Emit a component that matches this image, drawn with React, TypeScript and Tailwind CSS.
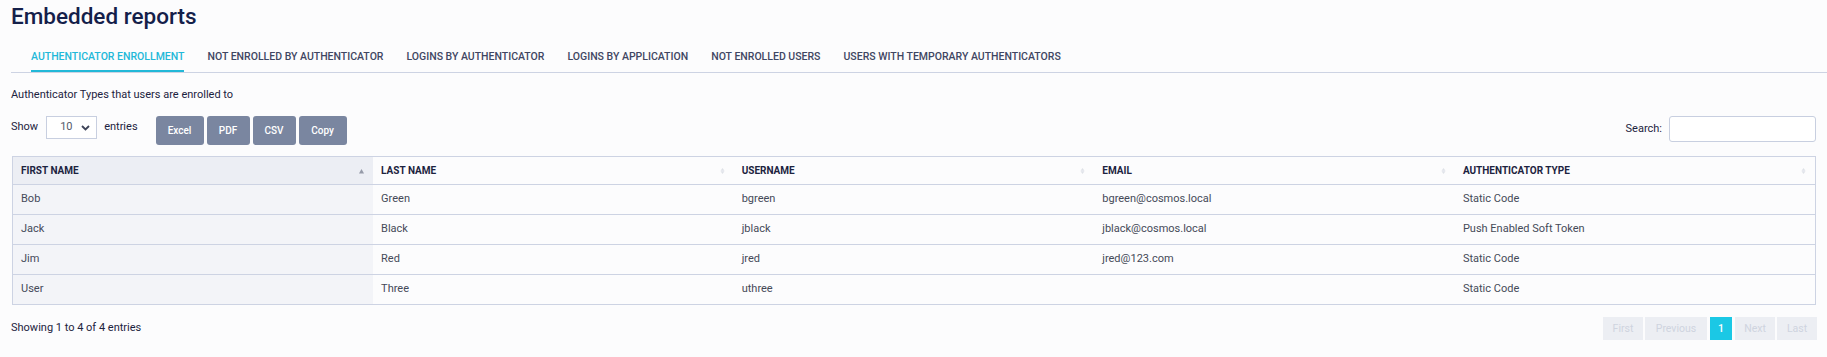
import React from "react";

const tabs = [
  "AUTHENTICATOR ENROLLMENT",
  "NOT ENROLLED BY AUTHENTICATOR",
  "LOGINS BY AUTHENTICATOR",
  "LOGINS BY APPLICATION",
  "NOT ENROLLED USERS",
  "USERS WITH TEMPORARY AUTHENTICATORS",
];

const cols = ["FIRST NAME", "LAST NAME", "USERNAME", "EMAIL", "AUTHENTICATOR TYPE"];

const rows = [
  ["Bob", "Green", "bgreen", "bgreen@cosmos.local", "Static Code"],
  ["Jack", "Black", "jblack", "jblack@cosmos.local", "Push Enabled Soft Token"],
  ["Jim", "Red", "jred", "jred@123.com", "Static Code"],
  ["User", "Three", "uthree", "", "Static Code"],
];

function SortUp() {
  return (
    <svg width="7" height="8" viewBox="0 0 7 8" className="absolute right-[8px] top-1/2 -translate-y-1/2">
      <path d="M3.5 2 L6 6.5 L1 6.5 Z" fill="#959aa8" />
    </svg>
  );
}

function SortBoth() {
  return (
    <svg width="7" height="9" viewBox="0 0 7 9" className="absolute right-[8px] top-1/2 -translate-y-1/2">
      <path d="M3.5 1.5 L5.5 4.3 L1.5 4.3 Z" fill="#dfe2e8" />
      <path d="M3.5 7.5 L5.5 4.7 L1.5 4.7 Z" fill="#dfe2e8" />
    </svg>
  );
}

export default function App() {
  return (
    <div
      className="w-[1827px] h-[357px] bg-[#fcfcfd] text-[#1c2340] overflow-hidden"
      style={{ fontFamily: "Roboto, 'Noto Sans', sans-serif" }}
    >
      <h1 className="pl-[11px] pt-[3px] text-[22.5px] leading-[26px] font-medium text-[#14204a]">
        Embedded reports
      </h1>

      <div className="mt-[22px] ml-[11px] border-b border-[#cdd3e3] flex gap-[23px] pl-[20px]">
        {tabs.map((t, i) => (
          <div
            key={t}
            className={
              "text-[10.5px] leading-[12px] font-medium pb-[7px] border-b-2 " +
              (i === 0 ? "text-[#22b8d8] border-[#22b8d8]" : "text-[#3f4662] border-transparent")
            }
          >
            {t}
          </div>
        ))}
      </div>

      <div className="pl-[11px] mt-[15px] text-[11px] leading-[14px] text-[#1c2340]">
        Authenticator Types that users are enrolled to
      </div>

      <div className="flex items-start justify-between pl-[11px] pr-[11px] mt-[14px]">
        <div className="flex items-start">
          <div className="flex items-center h-[23px] text-[11px] text-[#1c2340]">
            <span>Show</span>
            <div className="ml-[8px] w-[51px] h-[23px] border border-[#c8cfe0] bg-white flex items-center justify-between pl-[13px] pr-[6px]">
              <span className="text-[11px] text-[#555b6b]">10</span>
              <svg width="9" height="6" viewBox="0 0 9 6">
                <path d="M1 1 L4.5 4.5 L8 1" fill="none" stroke="#3d4358" strokeWidth="1.8" />
              </svg>
            </div>
            <span className="ml-[7px]">entries</span>
          </div>
          <div className="flex gap-[3px] ml-[18px]">
            {[
              ["Excel", "w-[48px]"],
              ["PDF", "w-[43px]"],
              ["CSV", "w-[43px]"],
              ["Copy", "w-[48px]"],
            ].map(([l, w]) => (
              <div
                key={l}
                className={w + " h-[29px] rounded-[3px] bg-[#7a86a0] text-white text-[10px] font-medium flex items-center justify-center"}
              >
                {l}
              </div>
            ))}
          </div>
        </div>
        <div className="flex items-center h-[26px]">
          <span className="text-[11px] text-[#1c2340]">Search:</span>
          <div className="ml-[7px] w-[147px] h-[26px] border border-[#c8cfe0] rounded-[3px] bg-white" />
        </div>
      </div>

      <div className="pl-[12px] pr-[11px] mt-[11px]">
        <table className="w-full table-fixed border-collapse border border-[#cdd3e3] text-[11px]">
          <thead>
            <tr className="h-[28px]">
              {cols.map((c, i) => (
                <th
                  key={c}
                  className={
                    "relative text-left font-bold text-[10px] text-[#1c2340] pl-[8px] border-b border-[#cdd3e3] " +
                    (i === 0 ? "bg-[#eceef4]" : "bg-[#fcfcfd]")
                  }
                >
                  {c}
                  {i === 0 ? <SortUp /> : <SortBoth />}
                </th>
              ))}
            </tr>
          </thead>
          <tbody>
            {rows.map((r, ri) => (
              <tr key={ri} className="h-[30px] border-b border-[#cdd3e3]">
                {r.map((v, ci) => (
                  <td
                    key={ci}
                    className={
                      "pl-[8px] text-[#454a58] " + (ci === 0 ? "bg-[#f3f4f8]" : "bg-[#fcfcfd]")
                    }
                  >
                    {v}
                  </td>
                ))}
              </tr>
            ))}
          </tbody>
        </table>
      </div>

      <div className="flex items-center justify-between pl-[11px] pr-[10px] mt-[12px]">
        <span className="text-[11px] text-[#1c2340]">Showing 1 to 4 of 4 entries</span>
        <div className="flex gap-[2px] text-[10.5px]">
          <div className="w-[40px] h-[23px] bg-[#eceef3] text-[#cfd4df] flex items-center justify-center">First</div>
          <div className="w-[62px] h-[23px] bg-[#eceef3] text-[#cfd4df] flex items-center justify-center">Previous</div>
          <div className="w-[22px] h-[23px] bg-[#1bc8e5] text-white font-medium flex items-center justify-center ml-[1px]">1</div>
          <div className="w-[40px] h-[23px] bg-[#eceef3] text-[#cfd4df] flex items-center justify-center ml-[1px]">Next</div>
          <div className="w-[40px] h-[23px] bg-[#eceef3] text-[#cfd4df] flex items-center justify-center">Last</div>
        </div>
      </div>
    </div>
  );
}
